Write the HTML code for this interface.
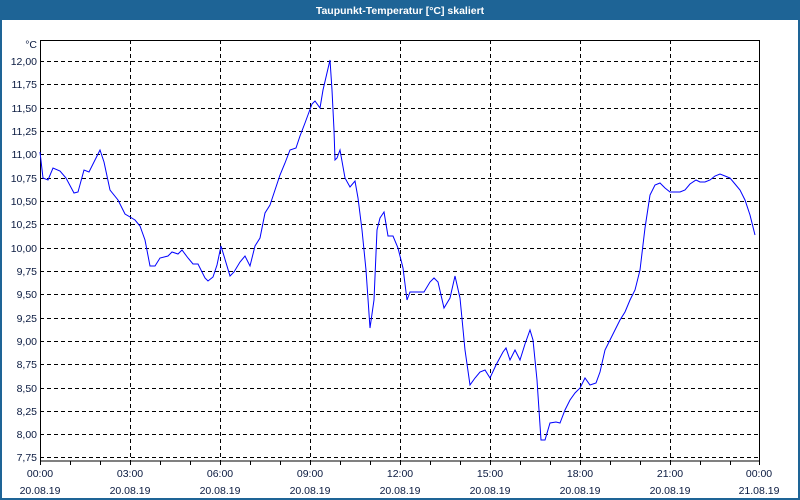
<!DOCTYPE html>
<html><head><style>
html,body{margin:0;padding:0;background:#fff;}
body{width:800px;height:500px;overflow:hidden;position:relative;}
</style></head><body>
<svg width="800" height="500" viewBox="0 0 800 500" xmlns="http://www.w3.org/2000/svg" style="position:absolute;left:0;top:0" font-family="'Liberation Sans',sans-serif" font-size="10.5">
<rect x="0" y="0" width="800" height="500" fill="#1e6496"/>
<rect x="2" y="20" width="796" height="478" fill="#fff"/>
<text x="400" y="14" fill="#fff" font-weight="bold" text-anchor="middle" font-size="10.5">Taupunkt-Temperatur [°C] skaliert</text>
<g stroke="#000" stroke-dasharray="4,3" stroke-width="1" shape-rendering="crispEdges">
<line x1="40" y1="61.5" x2="760" y2="61.5"/><line x1="40" y1="84.5" x2="760" y2="84.5"/><line x1="40" y1="108.5" x2="760" y2="108.5"/><line x1="40" y1="131.5" x2="760" y2="131.5"/><line x1="40" y1="154.5" x2="760" y2="154.5"/><line x1="40" y1="178.5" x2="760" y2="178.5"/><line x1="40" y1="201.5" x2="760" y2="201.5"/><line x1="40" y1="224.5" x2="760" y2="224.5"/><line x1="40" y1="248.5" x2="760" y2="248.5"/><line x1="40" y1="271.5" x2="760" y2="271.5"/><line x1="40" y1="294.5" x2="760" y2="294.5"/><line x1="40" y1="318.5" x2="760" y2="318.5"/><line x1="40" y1="341.5" x2="760" y2="341.5"/><line x1="40" y1="364.5" x2="760" y2="364.5"/><line x1="40" y1="388.5" x2="760" y2="388.5"/><line x1="40" y1="411.5" x2="760" y2="411.5"/><line x1="40" y1="434.5" x2="760" y2="434.5"/><line x1="40" y1="457.5" x2="760" y2="457.5"/>
<line x1="130.5" y1="40" x2="130.5" y2="461"/><line x1="220.5" y1="40" x2="220.5" y2="461"/><line x1="310.5" y1="40" x2="310.5" y2="461"/><line x1="400.5" y1="40" x2="400.5" y2="461"/><line x1="490.5" y1="40" x2="490.5" y2="461"/><line x1="580.5" y1="40" x2="580.5" y2="461"/><line x1="670.5" y1="40" x2="670.5" y2="461"/>
</g>
<rect x="40.5" y="40.5" width="719" height="420.5" fill="none" stroke="#000" shape-rendering="crispEdges"/>
<g stroke="#000" shape-rendering="crispEdges">
<path d="M40.5 461v4M70.5 461v4M100.5 461v4M130.5 461v4M160.5 461v4M190.5 461v4M220.5 461v4M250.5 461v4M280.5 461v4M310.5 461v4M340.5 461v4M370.5 461v4M400.5 461v4M430.5 461v4M460.5 461v4M490.5 461v4M520.5 461v4M550.5 461v4M580.5 461v4M610.5 461v4M640.5 461v4M670.5 461v4M700.5 461v4M730.5 461v4M759.5 461v4"/>
</g>
<g fill="#0a1a40" text-anchor="end">
<text x="37" y="48">°C</text>
<text x="37" y="65">12,00</text><text x="37" y="88">11,75</text><text x="37" y="112">11,50</text><text x="37" y="135">11,25</text><text x="37" y="158">11,00</text><text x="37" y="182">10,75</text><text x="37" y="205">10,50</text><text x="37" y="228">10,25</text><text x="37" y="252">10,00</text><text x="37" y="275">9,75</text><text x="37" y="298">9,50</text><text x="37" y="322">9,25</text><text x="37" y="345">9,00</text><text x="37" y="368">8,75</text><text x="37" y="392">8,50</text><text x="37" y="415">8,25</text><text x="37" y="438">8,00</text><text x="37" y="461">7,75</text>
</g>
<g fill="#0a1a40" text-anchor="middle">
<text x="40" y="477">00:00</text><text x="40" y="494">20.08.19</text>
<text x="130" y="477">03:00</text><text x="130" y="494">20.08.19</text>
<text x="220" y="477">06:00</text><text x="220" y="494">20.08.19</text>
<text x="310" y="477">09:00</text><text x="310" y="494">20.08.19</text>
<text x="400" y="477">12:00</text><text x="400" y="494">20.08.19</text>
<text x="490" y="477">15:00</text><text x="490" y="494">20.08.19</text>
<text x="580" y="477">18:00</text><text x="580" y="494">20.08.19</text>
<text x="670" y="477">21:00</text><text x="670" y="494">20.08.19</text>
<text x="759" y="477">00:00</text><text x="759" y="494">21.08.19</text>
</g>
<polyline fill="none" stroke="#0000ff" stroke-width="1" points="40,152 43,178 48,180 53,168 60,171 66,178 74,193 78,192 84,170 89,172 95,160 100,150 104,162 110,190 118,200 125,214 135,220 140,226 145,240 150,266 155,266 160,258 168,256 172,252 178,254 182,250 188,258 193,264 198,264 205,278 208,281 213,277 217,265 221,246 224,256 230,276 234,272 240,262 245,256 250,266 255,246 260,238 265,213 270,205 275,190 280,175 285,163 290,150 296,148 300,136 305,123 312,104 315,101 320,108 323,90 330,60 332,90 334,130 335,160 337,158 340,150 345,178 350,187 355,181 358,198 362,230 366,270 370,328 374,300 377,230 380,218 384,212 388,236 393,236 398,248 403,268 407,300 410,292 416,292 424,292 430,282 434,278 438,282 444,308 450,298 455,276 460,298 465,350 470,385 475,378 480,372 485,370 490,378 496,365 503,352 506,348 510,360 515,350 520,360 525,344 530,330 533,340 537,380 541,440 545,440 550,423 556,422 560,423 565,410 570,400 575,393 580,388 585,378 590,385 596,383 600,372 605,350 610,340 615,330 620,320 625,312 630,300 635,290 640,270 645,228 650,195 655,185 660,183 665,188 670,192 680,192 685,190 690,184 696,180 700,182 705,182 710,180 715,176 720,174 725,176 730,178 735,184 740,190 745,200 750,215 755,235"/>
</svg>
</body></html>
